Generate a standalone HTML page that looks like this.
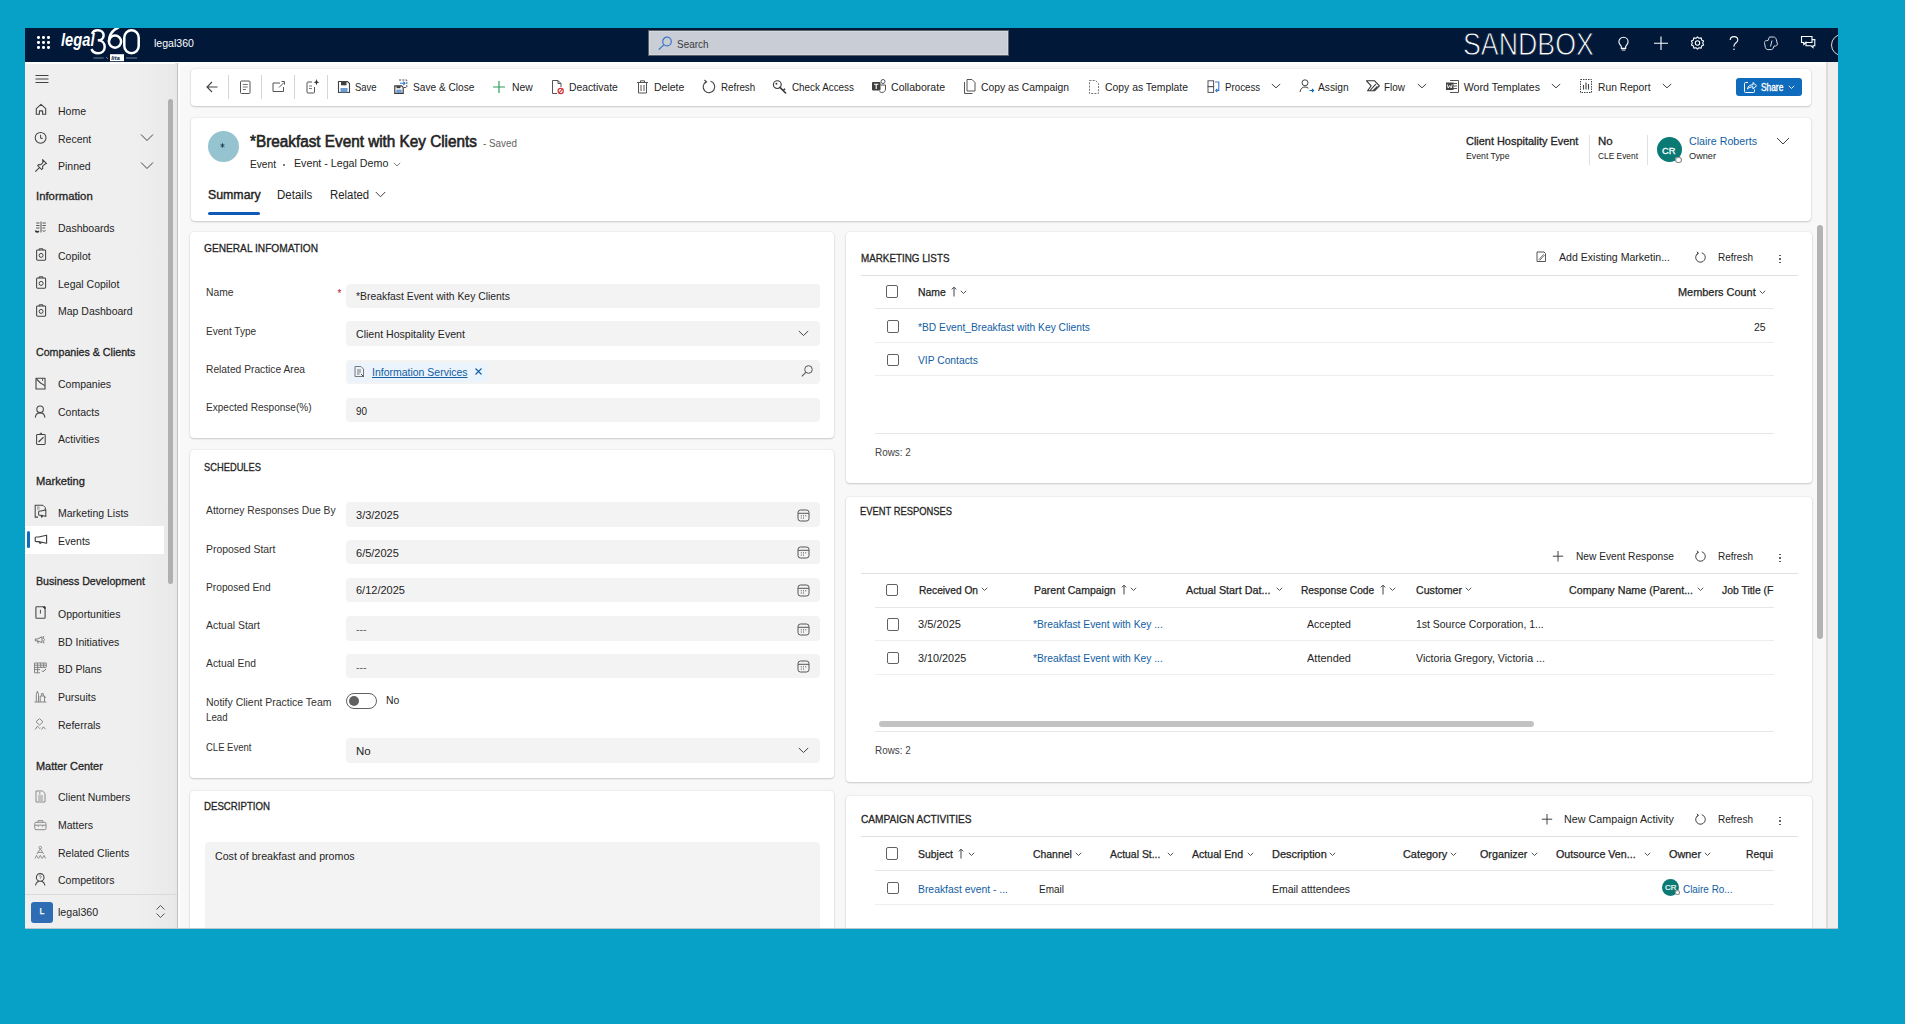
<!DOCTYPE html>
<html><head><meta charset="utf-8"><style>
html,body{margin:0;padding:0;width:1905px;height:1032px;overflow:hidden;background:#07a0c6;position:relative;}
#win{position:absolute;left:25px;top:28px;width:1813px;height:901px;overflow:hidden;background:#f8f8f8;}
#bot{position:absolute;left:0;top:1024px;width:1905px;height:8px;background:#fff;}
.t{position:absolute;white-space:nowrap;font-family:"Liberation Sans",sans-serif;transform-origin:0 0;}
.r{position:absolute;}
</style></head><body><div id="win">
<div class="r" style="left:0.00px;top:0.00px;width:1813.00px;height:34.00px;background:#011839"></div>
<div class="r" style="left:12.40px;top:8.40px;width:2.30px;height:2.30px;background:#fff;border-radius:50%"></div>
<div class="r" style="left:12.40px;top:13.40px;width:2.30px;height:2.30px;background:#fff;border-radius:50%"></div>
<div class="r" style="left:12.40px;top:18.40px;width:2.30px;height:2.30px;background:#fff;border-radius:50%"></div>
<div class="r" style="left:17.40px;top:8.40px;width:2.30px;height:2.30px;background:#fff;border-radius:50%"></div>
<div class="r" style="left:17.40px;top:13.40px;width:2.30px;height:2.30px;background:#fff;border-radius:50%"></div>
<div class="r" style="left:17.40px;top:18.40px;width:2.30px;height:2.30px;background:#fff;border-radius:50%"></div>
<div class="r" style="left:22.40px;top:8.40px;width:2.30px;height:2.30px;background:#fff;border-radius:50%"></div>
<div class="r" style="left:22.40px;top:13.40px;width:2.30px;height:2.30px;background:#fff;border-radius:50%"></div>
<div class="r" style="left:22.40px;top:18.40px;width:2.30px;height:2.30px;background:#fff;border-radius:50%"></div>
<div class="t" style="left:35.80px;top:-0.24px;font-size:18.6px;line-height:24px;color:#fff;font-weight:bold;transform:scaleX(0.7904);font-style:italic;">legal</div>
<svg class="r" style="left:63.00px;top:-1.00px;" width="56" height="36" viewBox="0 0 56 36" fill="none" stroke="#424242" stroke-width="1">
<path d="M4 6.8 C5 4 7.3 3.3 9.8 3.3 C13.3 3.3 15.6 5.5 15.6 8.4 C15.6 11.3 13.2 13.3 9.8 13.3 C13.9 13.3 16.7 16 16.7 20 C16.7 24 13.7 26.3 10.1 26.3 C7 26.3 4.5 24.9 3.5 22" stroke="#fff" stroke-width="2.5"/>
<circle cx="27" cy="14.6" r="6.1" stroke="#fff" stroke-width="2.5"/>
<path d="M20.9 14.6 C20.9 8 24.5 3 31 0" stroke="#fff" stroke-width="2.5"/>
<rect x="36.3" y="3.3" width="14.4" height="23" rx="7.2" stroke="#fff" stroke-width="2.5"/>
<path d="M5.5 31 H15.7 M38 31 H49" stroke="#6f7f9c" stroke-width="1"/>
<path d="M18 30 L20 32" stroke="#8a96b0" stroke-width="0.8"/>
<rect x="22" y="27.2" width="14" height="7" fill="#fff" stroke="none"/>
<text x="23.2" y="33.4" font-family="Liberation Sans" font-style="italic" font-weight="bold" font-size="6" fill="#011839" stroke="none">lita</text>
</svg>
<div class="t" style="left:128.60px;top:8.26px;font-size:10.8px;line-height:14px;color:#fff;transform:scaleX(0.9770);">legal360</div>
<div class="r" style="left:624.00px;top:3.00px;width:359.00px;height:24.00px;background:#c9cdd5;box-shadow:0 0 0 1px #5a606c,inset 0 0 0 1px #d5d8de"></div>
<svg class="r" style="left:631.00px;top:7.00px;" width="18" height="16" viewBox="0 0 18 16" fill="none" stroke="#424242" stroke-width="1"><circle cx="11" cy="6.5" r="4.3" stroke="#3b78c8" stroke-width="1.2"/><path d="M8 9.6 L2.8 14.6" stroke="#3b78c8" stroke-width="1.3"/></svg>
<div class="t" style="left:651.50px;top:9.03px;font-size:10.6px;line-height:14px;color:#3a3a3a;transform:scaleX(0.9379);">Search</div>
<div class="t" style="left:1438.00px;top:-4.51px;font-size:31.5px;line-height:41px;color:#fff;transform:scaleX(0.8491);-webkit-text-stroke:0.9px #011839;">SANDBOX</div>
<svg class="r" style="left:1591.00px;top:7.00px;" width="15" height="17" viewBox="0 0 15 17" fill="none" stroke="#424242" stroke-width="1"><path d="M7.5 2.2 C4.8 2.2 2.9 4.3 2.9 6.8 C2.9 9 4.3 10 5.3 11.4 V13.4 H9.7 V11.4 C10.7 10 12.1 9 12.1 6.8 C12.1 4.3 10.2 2.2 7.5 2.2 Z M5.6 15 H9.4" stroke="#fff" stroke-width="1.1"/></svg>
<svg class="r" style="left:1627.00px;top:7.00px;" width="18" height="17" viewBox="0 0 18 17" fill="none" stroke="#424242" stroke-width="1"><path d="M9 1.5 V15 M2 8.2 H16" stroke="#fff" stroke-width="1.1"/></svg>
<svg class="r" style="left:1664.00px;top:7.00px;" width="17" height="17" viewBox="0 0 17 17" fill="none" stroke="#424242" stroke-width="1"><path d="M8.5 1.8 L10 3.3 L12.2 2.9 L12.6 5 L14.6 6 L13.7 8 L14.6 10 L12.6 11 L12.2 13.1 L10 12.7 L8.5 14.2 L7 12.7 L4.8 13.1 L4.4 11 L2.4 10 L3.3 8 L2.4 6 L4.4 5 L4.8 2.9 L7 3.3 Z" stroke="#fff" stroke-width="1.1" stroke-linejoin="round"/><circle cx="8.5" cy="8" r="2.2" stroke="#fff" stroke-width="1.1"/></svg>
<svg class="r" style="left:1702.00px;top:7.00px;" width="14" height="17" viewBox="0 0 14 17" fill="none" stroke="#424242" stroke-width="1"><path d="M3.2 5 C3.2 2.8 4.9 1.6 7 1.6 C9.2 1.6 10.8 2.9 10.8 4.9 C10.8 6.7 9.6 7.4 8.5 8.2 C7.5 8.9 7 9.5 7 11 V11.8" stroke="#fff" stroke-width="1.1"/><circle cx="7" cy="14.3" r="0.8" fill="#fff" stroke="none"/></svg>
<svg class="r" style="left:1738.00px;top:7.00px;" width="16" height="16" viewBox="0 0 16 16" fill="none" stroke="#424242" stroke-width="1"><path d="M6.5 2 H10.5 C12 2 12.8 3 13.2 4.2 L14.2 8 C14.6 9.6 14 11 12.5 11 H11 L10 13.5 C9.6 14.4 9 14.6 8 14.6 H5 C3.6 14.6 2.8 13.8 2.4 12.6 L1.6 8.6 C1.2 7 2 5.6 3.5 5.6 H5 L6 3 C6.3 2.3 6.2 2 6.5 2 Z" stroke="#d8dbe0" stroke-width="1"/><path d="M7.5 11.5 L9 5.5" stroke="#d8dbe0" stroke-width="1"/></svg>
<svg class="r" style="left:1775.00px;top:6.00px;" width="16" height="16" viewBox="0 0 16 16" fill="none" stroke="#424242" stroke-width="1"><path d="M1.5 2.5 H12 V8.5 H6 L3.8 10.5 V8.5 H1.5 Z" stroke="#fff" stroke-width="1.1"/><path d="M6 7.5 V11.8 H11 L13 13.6 V11.8 H14.8 V5.6 H12" stroke="#fff" stroke-width="1.1"/></svg>
<svg class="r" style="left:1805.00px;top:5.00px;" width="10" height="24" viewBox="0 0 10 24" fill="none" stroke="#424242" stroke-width="1"><circle cx="12" cy="12" r="10.5" stroke="#ddd" stroke-width="1"/></svg>
<div class="r" style="left:153.00px;top:34.00px;width:1660.00px;height:5.00px;background:linear-gradient(#ffffff,#f8f8f8)"></div>
<div class="r" style="left:0.00px;top:34.00px;width:152.00px;height:867.00px;background:linear-gradient(90deg,#efefef 0,#efefef 110px,#e9e9e9 150px)"></div>
<div class="r" style="left:0.00px;top:34.00px;width:1813.00px;height:1.50px;background:#fff"></div>
<div class="r" style="left:150.00px;top:35.00px;width:2.00px;height:866.00px;background:#e7e7e7"></div>
<div class="r" style="left:152.00px;top:35.00px;width:1.00px;height:866.00px;background:#c2c2c2"></div>
<div class="r" style="left:153.00px;top:35.00px;width:2.00px;height:866.00px;background:#fcfcfc"></div>
<div class="r" style="left:143.00px;top:71.00px;width:5.00px;height:485.00px;background:#b0b0b0;border-radius:3px"></div>
<svg class="r" style="left:10.00px;top:46.00px;" width="14" height="10" viewBox="0 0 14 10" fill="none" stroke="#424242" stroke-width="1"><path d="M0.5 1.5 H13.5 M0.5 5 H13.5 M0.5 8.5 H13.5" stroke="#424242" stroke-width="1"/></svg>
<div class="t" style="left:33.00px;top:75.66px;font-size:10.5px;line-height:14px;color:#242424;">Home</div>
<svg class="r" style="left:9.00px;top:74.30px;" width="14" height="14" viewBox="0 0 14 14" fill="none" stroke="#424242" stroke-width="1"><path d="M2.3 6.6 L7 2.4 L11.7 6.6 V12.3 H8.6 V8.9 H5.4 V12.3 H2.3 Z" stroke="#444" stroke-width="1.1" stroke-linejoin="round"/></svg>
<div class="t" style="left:33.00px;top:103.56px;font-size:10.5px;line-height:14px;color:#242424;">Recent</div>
<svg class="r" style="left:9.00px;top:102.20px;" width="14" height="14" viewBox="0 0 14 14" fill="none" stroke="#424242" stroke-width="1"><circle cx="6.6" cy="7.8" r="5.4" stroke="#444" stroke-width="1.05"/><path d="M6.6 4.8 V8.3 H8.8" stroke="#444"/></svg>
<svg class="r" style="left:115.00px;top:105.20px;" width="14" height="9" viewBox="0 0 14 9" fill="none" stroke="#424242" stroke-width="1"><path d="M1 1.5 L7 7.5 L13 1.5" stroke="#424242" stroke-width="1"/></svg>
<div class="t" style="left:33.00px;top:131.36px;font-size:10.5px;line-height:14px;color:#242424;">Pinned</div>
<svg class="r" style="left:9.00px;top:130.00px;" width="14" height="14" viewBox="0 0 14 14" fill="none" stroke="#424242" stroke-width="1"><path d="M8.6 1.6 L12.6 5.6 L10.6 6.3 L8.5 8.4 L8.8 10.4 L7.6 11.5 L3.7 7.6 L4.8 6.4 L6.8 6.7 L8.9 4.6 Z M5.4 9.6 L1.3 13.7" stroke="#444" stroke-width="1.05" stroke-linejoin="round"/></svg>
<svg class="r" style="left:115.00px;top:133.00px;" width="14" height="9" viewBox="0 0 14 9" fill="none" stroke="#424242" stroke-width="1"><path d="M1 1.5 L7 7.5 L13 1.5" stroke="#424242" stroke-width="1"/></svg>
<div class="t" style="left:10.90px;top:161.12px;font-size:11.2px;line-height:15px;color:#242424;-webkit-text-stroke:0.3px #242424;transform:scaleX(1.0137);">Information</div>
<div class="t" style="left:33.00px;top:192.86px;font-size:10.5px;line-height:14px;color:#242424;">Dashboards</div>
<svg class="r" style="left:9.00px;top:191.50px;" width="14" height="14" viewBox="0 0 14 14" fill="none" stroke="#424242" stroke-width="1"><path d="M2.2 3 H5.5 M2.2 5.5 H5.5 M2.2 8 H5.5 M8.5 3 H11.8 M8.5 5.5 H11.8 M8.5 8 H11.2 M7 1.5 V12.5 M8.5 10.5 C9.5 11.5 10.5 11.5 11.5 10.5" stroke="#555" stroke-width="1"/><path d="M1.5 10.5 C2 12.3 4 12.3 4.8 11" stroke="#333" stroke-width="1.6"/></svg>
<div class="t" style="left:33.00px;top:220.76px;font-size:10.5px;line-height:14px;color:#242424;">Copilot</div>
<svg class="r" style="left:9.00px;top:219.40px;" width="14" height="14" viewBox="0 0 14 14" fill="none" stroke="#424242" stroke-width="1"><rect x="2.6" y="3" width="9" height="10.2" rx="0.9" stroke="#444" stroke-width="1.05"/><path d="M5.2 3.3 V1.8 H8.9 V3.3" stroke="#444"/><circle cx="7.1" cy="8.4" r="2" stroke="#444"/></svg>
<div class="t" style="left:33.00px;top:248.66px;font-size:10.5px;line-height:14px;color:#242424;">Legal Copilot</div>
<svg class="r" style="left:9.00px;top:247.30px;" width="14" height="14" viewBox="0 0 14 14" fill="none" stroke="#424242" stroke-width="1"><rect x="2.6" y="3" width="9" height="10.2" rx="0.9" stroke="#444" stroke-width="1.05"/><path d="M5.2 3.3 V1.8 H8.9 V3.3" stroke="#444"/><circle cx="7.1" cy="8.4" r="2" stroke="#444"/></svg>
<div class="t" style="left:33.00px;top:276.36px;font-size:10.5px;line-height:14px;color:#242424;">Map Dashboard</div>
<svg class="r" style="left:9.00px;top:275.00px;" width="14" height="14" viewBox="0 0 14 14" fill="none" stroke="#424242" stroke-width="1"><rect x="2.6" y="3" width="9" height="10.2" rx="0.9" stroke="#444" stroke-width="1.05"/><path d="M5.2 3.3 V1.8 H8.9 V3.3" stroke="#444"/><circle cx="7.1" cy="8.4" r="2" stroke="#444"/></svg>
<div class="t" style="left:10.90px;top:316.92px;font-size:11.2px;line-height:15px;color:#242424;-webkit-text-stroke:0.3px #242424;transform:scaleX(0.9515);">Companies &amp; Clients</div>
<div class="t" style="left:33.00px;top:348.86px;font-size:10.5px;line-height:14px;color:#242424;">Companies</div>
<svg class="r" style="left:9.00px;top:347.50px;" width="14" height="14" viewBox="0 0 14 14" fill="none" stroke="#424242" stroke-width="1"><path d="M2 2.2 H11 V13 H2 Z" stroke="#444" stroke-width="1.1" stroke-linejoin="round"/><path d="M2.4 3 L6.5 7 L9.6 8.8 L10.8 10" stroke="#444" stroke-width="1.05"/><path d="M8.5 2.2 V5" stroke="#444" stroke-width="0.8"/></svg>
<div class="t" style="left:33.00px;top:376.86px;font-size:10.5px;line-height:14px;color:#242424;">Contacts</div>
<svg class="r" style="left:9.00px;top:375.50px;" width="14" height="14" viewBox="0 0 14 14" fill="none" stroke="#424242" stroke-width="1"><circle cx="6.1" cy="5.3" r="3.3" stroke="#484848" stroke-width="1.1"/><path d="M1.3 13.6 C1.6 10.4 3.6 8.9 6.1 8.9 C8.6 8.9 10.6 10.4 10.9 13.6" stroke="#484848" stroke-width="1.1"/></svg>
<div class="t" style="left:33.00px;top:404.36px;font-size:10.5px;line-height:14px;color:#242424;">Activities</div>
<svg class="r" style="left:9.00px;top:403.00px;" width="14" height="14" viewBox="0 0 14 14" fill="none" stroke="#424242" stroke-width="1"><rect x="2.6" y="3.4" width="8.6" height="10" rx="0.8" stroke="#444" stroke-width="1.05"/><path d="M5.2 3.6 L6.9 1.8 L8.6 3.6" stroke="#444"/><path d="M4.6 11 L9.5 6.1 M4.6 11 L5.8 9.4" stroke="#444" stroke-width="1.2"/></svg>
<div class="t" style="left:10.90px;top:446.12px;font-size:11.2px;line-height:15px;color:#242424;-webkit-text-stroke:0.3px #242424;transform:scaleX(0.9964);">Marketing</div>
<div class="t" style="left:33.00px;top:477.76px;font-size:10.5px;line-height:14px;color:#242424;">Marketing Lists</div>
<svg class="r" style="left:9.00px;top:476.40px;" width="14" height="14" viewBox="0 0 14 14" fill="none" stroke="#424242" stroke-width="1"><path d="M9 1.3 H1.2 V13.1 H4" stroke="#444" stroke-width="1.05"/><path d="M9 1.3 L11.3 3.6 V6.2" stroke="#444"/><path d="M3 3.2 H5.5 M3 5 H5.5" stroke="#888"/><path d="M4.6 8 Q4.6 7 5.6 7 H7 L11.8 6 V12.3 L7 11.3 H5.6 Q4.6 11.3 4.6 10.3 Z M7 11.4 L7.6 13 L8.8 12" stroke="#444" stroke-width="1.05"/></svg>
<div class="r" style="left:0.00px;top:498.00px;width:139.00px;height:28.00px;background:#fff"></div>
<div class="r" style="left:2.00px;top:503.00px;width:3.00px;height:17.00px;background:#0f6cbd;border-radius:2px"></div>
<div class="t" style="left:33.00px;top:505.66px;font-size:10.5px;line-height:14px;color:#242424;">Events</div>
<svg class="r" style="left:9.00px;top:504.30px;" width="14" height="14" viewBox="0 0 14 14" fill="none" stroke="#424242" stroke-width="1"><path d="M1.2 6 Q1.2 5 2.2 5 H4.6 L12.6 3.2 V11.2 L4.6 9.6 H2.2 Q1.2 9.6 1.2 8.6 Z" stroke="#404040" stroke-width="1.15" stroke-linejoin="round"/><path d="M5.2 9.8 L6 11.5 L7.6 10.5" stroke="#404040" stroke-width="1.1"/></svg>
<div class="t" style="left:10.90px;top:546.42px;font-size:11.2px;line-height:15px;color:#242424;-webkit-text-stroke:0.3px #242424;transform:scaleX(0.9517);">Business Development</div>
<div class="t" style="left:33.00px;top:578.96px;font-size:10.5px;line-height:14px;color:#242424;">Opportunities</div>
<svg class="r" style="left:9.00px;top:577.60px;" width="14" height="14" viewBox="0 0 14 14" fill="none" stroke="#424242" stroke-width="1"><rect x="1.9" y="0.8" width="9.2" height="11.4" rx="0.8" stroke="#484848" stroke-width="1.1"/><path d="M6.4 3.8 V7.6" stroke="#484848"/><path d="M9.4 1 H11 V2.8 Z" fill="#333" stroke="#333"/></svg>
<div class="t" style="left:33.00px;top:606.76px;font-size:10.5px;line-height:14px;color:#242424;">BD Initiatives</div>
<svg class="r" style="left:9.00px;top:605.40px;" width="14" height="14" viewBox="0 0 14 14" fill="none" stroke="#424242" stroke-width="1"><path d="M1.3 6 H3.5 L8 3.8 V9.6 L3.5 7.8 H1.3 Z M3.5 8 L4.3 10.5" stroke="#777" stroke-width="1"/><path d="M9.8 3 L9.2 5.2 L10.6 6.5 L9.5 8.2 L10 10.6" stroke="#777" stroke-width="0.9"/></svg>
<div class="t" style="left:33.00px;top:634.36px;font-size:10.5px;line-height:14px;color:#242424;">BD Plans</div>
<svg class="r" style="left:9.00px;top:633.00px;" width="14" height="14" viewBox="0 0 14 14" fill="none" stroke="#424242" stroke-width="1"><path d="M0.5 2 H12.3 V6.2 M0.5 2 V11.8 H6 M0.5 4.2 H12.3 M0.5 6.4 H12 M0.5 8.6 H6 M3.6 2 V11.8 M6.7 2 V7 M9.6 2 V6.4" stroke="#808080" stroke-width="0.95"/><path d="M7.8 9.6 L9 10.8 L12 8" stroke="#707070" stroke-width="1"/></svg>
<div class="t" style="left:33.00px;top:662.16px;font-size:10.5px;line-height:14px;color:#242424;">Pursuits</div>
<svg class="r" style="left:9.00px;top:660.80px;" width="14" height="14" viewBox="0 0 14 14" fill="none" stroke="#424242" stroke-width="1"><path d="M0.5 13 H12.3 M2.3 13 V5.5 L3.4 2.2 L4.5 5.5 V13 M6.2 13 V7 H10.5 V13 M7.5 6.5 V4.6 H9.3 V7" stroke="#808080" stroke-width="0.95"/><path d="M10.5 8.3 H12" stroke="#808080"/></svg>
<div class="t" style="left:33.00px;top:689.96px;font-size:10.5px;line-height:14px;color:#242424;">Referrals</div>
<svg class="r" style="left:9.00px;top:688.60px;" width="14" height="14" viewBox="0 0 14 14" fill="none" stroke="#424242" stroke-width="1"><path d="M5.5 1.6 L9 4.8 L5.5 8 L2 4.8 Z" stroke="#808080" stroke-width="0.95"/><path d="M1.2 12.5 L3.3 9.3 L5 10.5 M7.6 12.5 L9.4 9.8 L11.6 12.2 M5.5 11.8 L6.2 10.6" stroke="#808080" stroke-width="0.95"/></svg>
<div class="t" style="left:10.90px;top:730.62px;font-size:11.2px;line-height:15px;color:#242424;-webkit-text-stroke:0.3px #242424;transform:scaleX(0.9772);">Matter Center</div>
<div class="t" style="left:33.00px;top:762.36px;font-size:10.5px;line-height:14px;color:#242424;">Client Numbers</div>
<svg class="r" style="left:9.00px;top:761.00px;" width="14" height="14" viewBox="0 0 14 14" fill="none" stroke="#424242" stroke-width="1"><path d="M2 2 H8.6 L11 4.4 V13 H2 Z" stroke="#8a8a8a" stroke-width="1" stroke-linejoin="round"/><path d="M4 7 H9 M4 9 H9 M4 11 H9 M5.8 3 V5.6" stroke="#8a8a8a" stroke-width="0.9"/></svg>
<div class="t" style="left:33.00px;top:790.16px;font-size:10.5px;line-height:14px;color:#242424;">Matters</div>
<svg class="r" style="left:9.00px;top:788.80px;" width="14" height="14" viewBox="0 0 14 14" fill="none" stroke="#424242" stroke-width="1"><rect x="0.8" y="5.3" width="11.2" height="7.4" rx="1.2" stroke="#8a8a8a" stroke-width="1"/><path d="M4 5.3 V3.6 H8.8 V5.3 M0.8 8.2 H12 M3.5 8.2 L4.6 9.8 M9.3 8.2 L8.2 9.8" stroke="#8a8a8a" stroke-width="0.95"/></svg>
<div class="t" style="left:33.00px;top:817.96px;font-size:10.5px;line-height:14px;color:#242424;">Related Clients</div>
<svg class="r" style="left:9.00px;top:816.60px;" width="14" height="14" viewBox="0 0 14 14" fill="none" stroke="#424242" stroke-width="1"><circle cx="6.3" cy="2.6" r="1.3" stroke="#888" stroke-width="0.9"/><path d="M6.3 3.9 L3 9 M6.3 3.9 L9.6 9 M3.5 7.4 H9.1 M1 13.5 L2.6 10.3 L4.2 13.5 M4.7 13.5 L6.3 10.3 L7.9 13.5 M8.4 13.5 L10 10.3 L11.6 13.5" stroke="#888" stroke-width="0.9"/></svg>
<div class="t" style="left:33.00px;top:845.36px;font-size:10.5px;line-height:14px;color:#242424;">Competitors</div>
<svg class="r" style="left:9.00px;top:844.00px;" width="14" height="14" viewBox="0 0 14 14" fill="none" stroke="#424242" stroke-width="1"><circle cx="6.2" cy="5.4" r="3.8" stroke="#444" stroke-width="1.1"/><path d="M1.5 13.5 C2 10.5 4 9.4 5.2 9.2 M10.9 13.5 C10.4 10.5 8.4 9.4 7.2 9.2" stroke="#444" stroke-width="1.1"/><path d="M5.2 4.5 C5.2 3.4 7.4 3.4 7.3 4.7 C7.2 5.6 6.2 5.7 6.2 6.8" stroke="#666" stroke-width="0.8"/></svg>
<div class="r" style="left:0.00px;top:866.00px;width:152.00px;height:1.00px;background:#dadada"></div>
<div class="r" style="left:6.00px;top:873.50px;width:21.50px;height:21.50px;background:#2e6db4;border-radius:3px"></div>
<div class="t" style="left:14.60px;top:877.75px;font-size:8.8px;line-height:11px;color:#fff;-webkit-text-stroke:0.25px #fff;">L</div>
<div class="t" style="left:33.00px;top:877.33px;font-size:10.6px;line-height:14px;color:#242424;">legal360</div>
<svg class="r" style="left:129.00px;top:875.00px;" width="14" height="18" viewBox="0 0 14 18" fill="none" stroke="#424242" stroke-width="1"><path d="M2.5 6.5 L6.5 2.5 L10.5 6.5 M2.5 10.5 L6.5 14.5 L10.5 10.5" stroke="#555" stroke-width="1"/></svg>
<div class="r" style="left:1801.00px;top:34.00px;width:2.00px;height:867.00px;background:#dcdcdc"></div>
<div class="r" style="left:1803.00px;top:34.00px;width:10.00px;height:867.00px;background:#eeeeee"></div>
<div class="r" style="left:1792.00px;top:196.50px;width:5.50px;height:414.50px;background:#b3b3b3;border-radius:3px"></div>
<div class="r" style="left:165.50px;top:40.50px;width:1620.50px;height:37.00px;background:#fff;border-radius:4px;box-shadow:0 0 2px rgba(0,0,0,.12),0 1px 2px rgba(0,0,0,.16)"></div>
<div class="r" style="left:203.00px;top:46.80px;width:1.00px;height:24.50px;background:#d6d6d6"></div>
<div class="r" style="left:236.00px;top:46.80px;width:1.00px;height:24.50px;background:#d6d6d6"></div>
<div class="r" style="left:269.00px;top:46.80px;width:1.00px;height:24.50px;background:#d6d6d6"></div>
<div class="r" style="left:302.00px;top:46.80px;width:1.00px;height:24.50px;background:#d6d6d6"></div>
<svg class="r" style="left:180.00px;top:52.00px;" width="14" height="14" viewBox="0 0 14 14" fill="none" stroke="#424242" stroke-width="1"><path d="M7 2 L2 7 L7 12 M2 7 H12.5" stroke="#424242" stroke-width="1.1"/></svg>
<svg class="r" style="left:214.00px;top:52.00px;" width="13" height="15" viewBox="0 0 13 15" fill="none" stroke="#424242" stroke-width="1"><rect x="1.5" y="1" width="9.5" height="12.5" rx="1" stroke="#555"/><path d="M3.8 4.5 H8.8 M3.8 7 H8.8 M3.8 9.5 H7" stroke="#777"/></svg>
<svg class="r" style="left:246.00px;top:51.00px;" width="15" height="15" viewBox="0 0 15 15" fill="none" stroke="#424242" stroke-width="1"><path d="M9 4 H2 V12.5 H12.5 V8" stroke="#555"/><path d="M8 8.5 L13 3.5 M10.5 2.5 H13.5 V5.5" stroke="#555"/></svg>
<svg class="r" style="left:280.00px;top:50.00px;" width="15" height="17" viewBox="0 0 15 17" fill="none" stroke="#424242" stroke-width="1"><path d="M7 4 H3 C2.3 4 2 4.5 2 5 V14 C2 14.8 2.3 15 3 15 H8.5 C9.3 15 9.5 14.6 9.5 14 V9" stroke="#555"/><path d="M4 8 H7 M4 10.5 H7" stroke="#777"/><path d="M11.5 1 L12.3 3.5 L14.5 4.2 L12.3 5 L11.5 7.5 L10.7 5 L8.5 4.2 L10.7 3.5 Z" fill="#333" stroke="none"/></svg>
<svg class="r" style="left:312.00px;top:52.00px;" width="14" height="14" viewBox="0 0 14 14" fill="none" stroke="#424242" stroke-width="1"><path d="M1.5 1.5 H10.5 L12.5 3.5 V12.5 H1.5 Z" stroke="#404040" stroke-width="1.1"/><rect x="4" y="1.8" width="5.5" height="3.5" fill="#404040" stroke="none"/><rect x="3.5" y="8" width="7" height="4.3" fill="#6b9bd1" stroke="none"/></svg>
<div class="t" style="left:330.00px;top:51.73px;font-size:10.6px;line-height:14px;color:#242424;transform:scaleX(0.8940);">Save</div>
<svg class="r" style="left:368.00px;top:50.00px;" width="16" height="17" viewBox="0 0 16 17" fill="none" stroke="#424242" stroke-width="1"><path d="M6 2 H13.8 V9.5 H11" stroke="#555" stroke-width="1" stroke-dasharray="2.2 1"/><path d="M7 5.3 H12 M10.3 3.6 L12 5.3 L10.3 7" stroke="#2f7bd0" stroke-width="1.1"/><path d="M1.8 7.8 H8.6 L10.2 9.4 V15.4 H1.8 Z" stroke="#3a3a3a" stroke-width="1.2"/><rect x="3.3" y="11.6" width="5.4" height="3.3" fill="#6b9bd1" stroke="none"/><rect x="3.5" y="8.2" width="4" height="2" fill="#3a3a3a" stroke="none"/></svg>
<div class="t" style="left:388.30px;top:51.73px;font-size:10.6px;line-height:14px;color:#242424;transform:scaleX(0.9560);">Save &amp; Close</div>
<svg class="r" style="left:467.00px;top:52.00px;" width="14" height="14" viewBox="0 0 14 14" fill="none" stroke="#424242" stroke-width="1"><path d="M7 1 V13 M1 7 H13" stroke="#2e9e5a" stroke-width="1.2"/></svg>
<div class="t" style="left:486.50px;top:51.73px;font-size:10.6px;line-height:14px;color:#242424;transform:scaleX(0.9809);">New</div>
<svg class="r" style="left:525.00px;top:51.00px;" width="15" height="16" viewBox="0 0 15 16" fill="none" stroke="#424242" stroke-width="1"><path d="M8 1.5 H2.5 V14.5 H7 M8 1.5 L11 4.5 V8 M8 1.5 V4.5 H11" stroke="#555"/><circle cx="10.7" cy="12" r="2.6" stroke="#d13438" stroke-width="1.2"/><path d="M9 13.8 L12.4 10.2" stroke="#d13438" stroke-width="1.1"/></svg>
<div class="t" style="left:544.00px;top:51.73px;font-size:10.6px;line-height:14px;color:#242424;transform:scaleX(0.9744);">Deactivate</div>
<svg class="r" style="left:611.00px;top:51.00px;" width="13" height="16" viewBox="0 0 13 16" fill="none" stroke="#424242" stroke-width="1"><path d="M1 3.5 H12 M4.5 3.5 V1.8 H8.5 V3.5 M2.5 3.5 V14 H10.5 V3.5 M5 6 V12 M8 6 V12" stroke="#555"/></svg>
<div class="t" style="left:629.00px;top:51.73px;font-size:10.6px;line-height:14px;color:#242424;transform:scaleX(0.9921);">Delete</div>
<svg class="r" style="left:676.00px;top:51.00px;" width="16" height="16" viewBox="0 0 16 16" fill="none" stroke="#424242" stroke-width="1"><path d="M5.2 2.8 A5.8 5.8 0 1 0 9.5 2.3" stroke="#444" stroke-width="1.1"/><path d="M3.5 1 L5.5 3 L3.2 4.6" stroke="#444" stroke-width="1.1"/></svg>
<div class="t" style="left:695.60px;top:51.73px;font-size:10.6px;line-height:14px;color:#242424;transform:scaleX(0.9214);">Refresh</div>
<svg class="r" style="left:747.00px;top:51.00px;" width="16" height="16" viewBox="0 0 16 16" fill="none" stroke="#424242" stroke-width="1"><circle cx="5.3" cy="5.6" r="3.9" stroke="#3a3a3a" stroke-width="1.15"/><circle cx="4.4" cy="4.7" r="1" fill="#3a3a3a" stroke="none"/><path d="M8 8.4 L13.6 14 M11.2 11.6 L12.6 10.2" stroke="#3a3a3a" stroke-width="1.6" stroke-linecap="round"/></svg>
<div class="t" style="left:767.00px;top:51.73px;font-size:10.6px;line-height:14px;color:#242424;transform:scaleX(0.9313);">Check Access</div>
<svg class="r" style="left:846.00px;top:50.00px;" width="16" height="16" viewBox="0 0 16 16" fill="none" stroke="#424242" stroke-width="1"><rect x="1" y="4" width="8.5" height="8.5" rx="1" fill="#404040" stroke="none"/><path d="M3 6.2 H7.5 M5.2 6.2 V11" stroke="#fff" stroke-width="1.1"/><circle cx="12" cy="3.5" r="2" stroke="#555"/><path d="M9.5 7 H14.5 V11 C14.5 13 13 14.5 11 14.5 C9.8 14.5 9 14 8.5 13" stroke="#555"/></svg>
<div class="t" style="left:865.70px;top:51.73px;font-size:10.6px;line-height:14px;color:#242424;transform:scaleX(0.9979);">Collaborate</div>
<svg class="r" style="left:938.00px;top:50.00px;" width="14" height="17" viewBox="0 0 14 17" fill="none" stroke="#424242" stroke-width="1"><path d="M4 1.5 H9 L12 4.5 V13 H4 Z" stroke="#555"/><path d="M1.5 4 V15.5 H9.5" stroke="#555"/></svg>
<div class="t" style="left:956.00px;top:51.73px;font-size:10.6px;line-height:14px;color:#242424;transform:scaleX(0.9762);">Copy as Campaign</div>
<svg class="r" style="left:1063.00px;top:51.00px;" width="12" height="16" viewBox="0 0 12 16" fill="none" stroke="#424242" stroke-width="1"><path d="M1.5 1.5 H7.5 L10.5 4.5 V14.5 H1.5 Z" stroke="#777" stroke-dasharray="2 1.2"/></svg>
<div class="t" style="left:1080.00px;top:51.73px;font-size:10.6px;line-height:14px;color:#242424;transform:scaleX(0.9805);">Copy as Template</div>
<svg class="r" style="left:1181.00px;top:50.00px;" width="16" height="17" viewBox="0 0 16 17" fill="none" stroke="#424242" stroke-width="1"><rect x="2" y="2.8" width="5.6" height="5.8" stroke="#555" stroke-width="1"/><rect x="2" y="8.6" width="5.6" height="5.8" stroke="#555" stroke-width="1"/><path d="M9 4 H12.8 V12.4 H10" stroke="#2f7bd0" stroke-width="1.1"/><path d="M11.3 10.8 L9.7 12.4 L11.3 14" stroke="#2f7bd0" stroke-width="1.1"/></svg>
<div class="t" style="left:1199.80px;top:51.73px;font-size:10.6px;line-height:14px;color:#242424;transform:scaleX(0.9193);">Process</div>
<svg class="r" style="left:1246.00px;top:55.00px;" width="10" height="7" viewBox="0 0 10 7" fill="none" stroke="#424242" stroke-width="1"><path d="M0.8 1 L5.0 4.8 L9.2 1" stroke="#424242" stroke-width="1"/></svg>
<svg class="r" style="left:1274.00px;top:50.00px;" width="16" height="16" viewBox="0 0 16 16" fill="none" stroke="#424242" stroke-width="1"><circle cx="6" cy="4.8" r="3" stroke="#444"/><path d="M1 14 C1.5 10.5 3.5 9 6 9 C7.5 9 8.5 9.5 9.5 10.3" stroke="#444"/><path d="M10.5 12.5 H14.5 M13 11 L14.5 12.5 L13 14" stroke="#0f6cbd" stroke-width="1.2"/></svg>
<div class="t" style="left:1292.70px;top:51.73px;font-size:10.6px;line-height:14px;color:#242424;transform:scaleX(0.9618);">Assign</div>
<svg class="r" style="left:1340.00px;top:51.00px;" width="16" height="14" viewBox="0 0 16 14" fill="none" stroke="#424242" stroke-width="1"><path d="M1.5 1.8 H9.6 L14.4 6.8 L9.6 11.8 H2.6 L6.2 6.8 Z" stroke="#333" stroke-width="1.1" stroke-linejoin="round"/><path d="M5 11.5 L10.8 5.2 M8.4 11.5 L12.4 7.3" stroke="#333" stroke-width="1.1"/></svg>
<div class="t" style="left:1359.00px;top:51.73px;font-size:10.6px;line-height:14px;color:#242424;transform:scaleX(0.9383);">Flow</div>
<svg class="r" style="left:1392.00px;top:55.00px;" width="10" height="7" viewBox="0 0 10 7" fill="none" stroke="#424242" stroke-width="1"><path d="M0.8 1 L5.0 4.8 L9.2 1" stroke="#424242" stroke-width="1"/></svg>
<svg class="r" style="left:1420.00px;top:51.00px;" width="15" height="15" viewBox="0 0 15 15" fill="none" stroke="#424242" stroke-width="1"><path d="M5 1.5 H13.5 V13.5 H5" stroke="#555"/><path d="M7 4.5 H12 M7 7 H12 M7 9.5 H12" stroke="#555"/><rect x="1" y="3.5" width="7.5" height="7.5" fill="#444" stroke="none"/><path d="M2.2 5.5 L3.2 9 L4.7 6.5 L6.2 9 L7.2 5.5" stroke="#fff" stroke-width="0.9"/></svg>
<div class="t" style="left:1438.80px;top:51.73px;font-size:10.6px;line-height:14px;color:#242424;transform:scaleX(1.0000);">Word Templates</div>
<svg class="r" style="left:1526.00px;top:55.00px;" width="10" height="7" viewBox="0 0 10 7" fill="none" stroke="#424242" stroke-width="1"><path d="M0.8 1 L5.0 4.8 L9.2 1" stroke="#424242" stroke-width="1"/></svg>
<svg class="r" style="left:1554.00px;top:50.00px;" width="14" height="16" viewBox="0 0 14 16" fill="none" stroke="#424242" stroke-width="1"><rect x="1.5" y="1.5" width="11" height="13" stroke="#444" stroke-dasharray="1.5 1"/><path d="M4.5 11.5 V7 M7 11.5 V4.5 M9.5 11.5 V6" stroke="#444" stroke-width="1.1"/></svg>
<div class="t" style="left:1573.00px;top:51.73px;font-size:10.6px;line-height:14px;color:#242424;transform:scaleX(0.9703);">Run Report</div>
<svg class="r" style="left:1637.00px;top:55.00px;" width="10" height="7" viewBox="0 0 10 7" fill="none" stroke="#424242" stroke-width="1"><path d="M0.8 1 L5.0 4.8 L9.2 1" stroke="#424242" stroke-width="1"/></svg>
<div class="r" style="left:1710.70px;top:49.80px;width:66.50px;height:18.50px;background:#0f6cbd;border-radius:3px"></div>
<svg class="r" style="left:1718.00px;top:52.00px;" width="15" height="14" viewBox="0 0 15 14" fill="none" stroke="#424242" stroke-width="1"><path d="M5 2.5 H2.5 C1.8 2.5 1.5 3 1.5 3.5 V11.5 C1.5 12.2 1.8 12.5 2.5 12.5 H10.5 C11.2 12.5 11.5 12.2 11.5 11.5 V9.5" stroke="#fff" stroke-width="1"/><path d="M4.5 9 C5 6 7 4.8 10 4.8 V2.5 L13.5 5.8 L10 9 V6.8 C7.5 6.8 6 7.5 4.5 9 Z" stroke="#fff" stroke-width="1"/></svg>
<div class="t" style="left:1735.70px;top:52.60px;font-size:10.4px;line-height:14px;color:#fff;-webkit-text-stroke:0.35px #fff;transform:scaleX(0.8042);">Share</div>
<svg class="r" style="left:1763.00px;top:57.00px;" width="7" height="5" viewBox="0 0 7 5" fill="none" stroke="#424242" stroke-width="1"><path d="M0.8 0.8 L3.5 3.5 L6.2 0.8" stroke="#fff" stroke-width="0.9"/></svg>
<div class="r" style="left:165.50px;top:90.00px;width:1620.50px;height:103.00px;background:#fff;border-radius:4px;box-shadow:0 0 2px rgba(0,0,0,.12),0 1px 2px rgba(0,0,0,.16)"></div>
<div class="r" style="left:182.50px;top:103.00px;width:31.00px;height:31.00px;background:#95c4d0;border-radius:50%"></div>
<svg class="r" style="left:195.20px;top:114.50px;" width="5" height="5" viewBox="0 0 5 5" fill="none" stroke="#424242" stroke-width="1"><path d="M2.5 0.3 V4.7 M0.6 1.4 L4.4 3.6 M0.6 3.6 L4.4 1.4" stroke="#1d3a4a" stroke-width="0.9"/></svg>
<div class="t" style="left:225.40px;top:103.59px;font-size:15.6px;line-height:20px;color:#242424;-webkit-text-stroke:0.6px #242424;transform:scaleX(0.9806);">*Breakfast Event with Key Clients</div>
<div class="t" style="left:458.40px;top:108.60px;font-size:10.4px;line-height:14px;color:#616161;transform:scaleX(0.9458);">- Saved</div>
<div class="t" style="left:225.00px;top:128.63px;font-size:10.6px;line-height:14px;color:#242424;transform:scaleX(0.9592);">Event</div>
<div class="r" style="left:258.00px;top:136.00px;width:1.60px;height:1.60px;background:#616161;border-radius:50%"></div>
<div class="t" style="left:269.00px;top:128.33px;font-size:10.6px;line-height:14px;color:#242424;transform:scaleX(1.0076);">Event - Legal Demo</div>
<svg class="r" style="left:367.50px;top:134.00px;" width="8" height="5" viewBox="0 0 8 5" fill="none" stroke="#424242" stroke-width="1"><path d="M0.8 0.8 L4 4 L7.2 0.8" stroke="#707070" stroke-width="0.9"/></svg>
<div class="t" style="left:182.50px;top:159.13px;font-size:12.6px;line-height:16px;color:#242424;-webkit-text-stroke:0.4px #242424;transform:scaleX(0.9796);">Summary</div>
<div class="t" style="left:251.80px;top:159.34px;font-size:12px;line-height:16px;color:#242424;transform:scaleX(0.9596);">Details</div>
<div class="t" style="left:304.80px;top:159.34px;font-size:12px;line-height:16px;color:#242424;transform:scaleX(0.9477);">Related</div>
<svg class="r" style="left:350.00px;top:163.00px;" width="11" height="7" viewBox="0 0 11 7" fill="none" stroke="#424242" stroke-width="1"><path d="M0.8 1 L5.5 5.8 L10.2 1" stroke="#424242" stroke-width="1"/></svg>
<div class="r" style="left:182.90px;top:184.30px;width:52.50px;height:3.00px;background:#0f5ab8;border-radius:2px"></div>
<div class="t" style="left:1441.20px;top:106.22px;font-size:11.2px;line-height:15px;color:#242424;-webkit-text-stroke:0.3px #242424;transform:scaleX(0.9769);">Client Hospitality Event</div>
<div class="t" style="left:1441.20px;top:120.80px;font-size:9.8px;line-height:13px;color:#242424;transform:scaleX(0.8904);">Event Type</div>
<div class="r" style="left:1563.50px;top:107.00px;width:1.00px;height:30.00px;background:#e0e0e0"></div>
<div class="t" style="left:1573.00px;top:106.22px;font-size:11.2px;line-height:15px;color:#242424;-webkit-text-stroke:0.3px #242424;transform:scaleX(1.0262);">No</div>
<div class="t" style="left:1573.00px;top:120.80px;font-size:9.8px;line-height:13px;color:#242424;transform:scaleX(0.8538);">CLE Event</div>
<div class="r" style="left:1622.00px;top:107.00px;width:1.00px;height:30.00px;background:#e0e0e0"></div>
<div class="r" style="left:1631.80px;top:109.20px;width:24.80px;height:25.00px;background:#0b7a75;border-radius:50%"></div>
<div class="t" style="left:1637.30px;top:116.10px;font-size:9.8px;line-height:13px;color:#fff;-webkit-text-stroke:0.3px #fff;transform:scaleX(0.9478);">CR</div>
<div class="r" style="left:1650.00px;top:128.60px;width:6.60px;height:6.60px;background:#fff;border-radius:50%;box-shadow:inset 0 0 0 1.1px #8a8a8a"></div>
<div class="t" style="left:1664.00px;top:106.39px;font-size:11px;line-height:14px;color:#115ea3;transform:scaleX(0.9672);">Claire Roberts</div>
<div class="t" style="left:1664.00px;top:120.80px;font-size:9.8px;line-height:13px;color:#242424;transform:scaleX(0.9354);">Owner</div>
<svg class="r" style="left:1751.00px;top:109.00px;" width="14" height="8" viewBox="0 0 14 8" fill="none" stroke="#424242" stroke-width="1"><path d="M1 1 L7 7 L13 1" stroke="#424242" stroke-width="1"/></svg>
<div class="r" style="left:165.00px;top:204.00px;width:644.00px;height:205.50px;background:#fff;border-radius:4px;box-shadow:0 0 2px rgba(0,0,0,.12),0 1px 2px rgba(0,0,0,.16)"></div>
<div class="t" style="left:179.00px;top:213.12px;font-size:11.2px;line-height:15px;color:#242424;-webkit-text-stroke:0.3px #242424;transform:scaleX(0.9079);">GENERAL INFOMATION</div>
<div class="t" style="left:180.60px;top:256.83px;font-size:10.6px;line-height:14px;color:#323130;transform:scaleX(0.9725);">Name</div>
<div class="r" style="left:321.00px;top:255.50px;width:473.50px;height:24.50px;background:#f3f3f3;border-radius:4px"></div>
<div class="t" style="left:331.00px;top:261.43px;font-size:10.6px;line-height:14px;color:#242424;transform:scaleX(0.9790);">*Breakfast Event with Key Clients</div>
<div class="t" style="left:312.50px;top:259.04px;font-size:10px;line-height:13px;color:#c50f1f;">*</div>
<div class="t" style="left:180.60px;top:295.73px;font-size:10.6px;line-height:14px;color:#323130;transform:scaleX(0.9500);">Event Type</div>
<div class="r" style="left:321.00px;top:293.30px;width:473.50px;height:24.50px;background:#f3f3f3;border-radius:4px"></div>
<div class="t" style="left:331.00px;top:299.23px;font-size:10.6px;line-height:14px;color:#242424;transform:scaleX(1.0001);">Client Hospitality Event</div>
<svg class="r" style="left:772.50px;top:302.30px;" width="11" height="7" viewBox="0 0 11 7" fill="none" stroke="#424242" stroke-width="1"><path d="M0.8 1 L5.5 5.5 L10.2 1" stroke="#424242" stroke-width="1"/></svg>
<div class="t" style="left:180.60px;top:334.23px;font-size:10.6px;line-height:14px;color:#323130;transform:scaleX(0.9666);">Related Practice Area</div>
<div class="r" style="left:321.00px;top:331.80px;width:473.50px;height:24.50px;background:#f3f3f3;border-radius:4px"></div>
<div class="r" style="left:324.40px;top:334.50px;width:138.20px;height:19.00px;background:#ebf3fc;border-radius:3px"></div>
<svg class="r" style="left:327.50px;top:337.00px;" width="13" height="13" viewBox="0 0 13 13" fill="none" stroke="#424242" stroke-width="1"><path d="M2 1.5 H8 L10.5 4 V11.5 H2 Z M4 5 H8 M4 7 H8 M4 9 H6.5" stroke="#777"/><path d="M8 9 L11 12" stroke="#555"/></svg>
<div class="t" style="left:347.40px;top:337.33px;font-size:10.6px;line-height:14px;color:#115ea3;transform:scaleX(0.9895);text-decoration:underline;">Information Services</div>
<svg class="r" style="left:448.50px;top:339.00px;" width="9" height="9" viewBox="0 0 9 9" fill="none" stroke="#424242" stroke-width="1"><path d="M1.5 1.5 L7.5 7.5 M7.5 1.5 L1.5 7.5" stroke="#115ea3" stroke-width="1.1"/></svg>
<svg class="r" style="left:774.50px;top:336.00px;" width="14" height="14" viewBox="0 0 14 14" fill="none" stroke="#424242" stroke-width="1"><circle cx="8.5" cy="5.5" r="3.8" stroke="#555"/><path d="M5.8 8.3 L1.8 12.3" stroke="#555" stroke-width="1.1"/></svg>
<div class="t" style="left:180.60px;top:372.03px;font-size:10.6px;line-height:14px;color:#323130;transform:scaleX(0.9483);">Expected Response(%)</div>
<div class="r" style="left:321.00px;top:369.60px;width:473.50px;height:24.50px;background:#f3f3f3;border-radius:4px"></div>
<div class="t" style="left:331.00px;top:375.53px;font-size:10.6px;line-height:14px;color:#242424;transform:scaleX(0.9329);">90</div>
<div class="r" style="left:165.00px;top:422.30px;width:644.00px;height:327.40px;background:#fff;border-radius:4px;box-shadow:0 0 2px rgba(0,0,0,.12),0 1px 2px rgba(0,0,0,.16)"></div>
<div class="t" style="left:179.00px;top:431.62px;font-size:11.2px;line-height:15px;color:#242424;-webkit-text-stroke:0.3px #242424;transform:scaleX(0.8333);">SCHEDULES</div>
<div class="t" style="left:180.60px;top:475.33px;font-size:10.6px;line-height:14px;color:#323130;transform:scaleX(0.9740);">Attorney Responses Due By</div>
<div class="r" style="left:321.00px;top:474.00px;width:473.50px;height:24.50px;background:#f3f3f3;border-radius:4px"></div>
<div class="t" style="left:331.00px;top:479.93px;font-size:10.6px;line-height:14px;color:#242424;transform:scaleX(1.0397);">3/3/2025</div>
<svg class="r" style="left:771.50px;top:480.50px;" width="13" height="13" viewBox="0 0 13 13" fill="none" stroke="#424242" stroke-width="1"><rect x="1" y="1" width="11" height="11" rx="2.5" stroke="#555"/><path d="M1 4.3 H12" stroke="#555"/><path d="M3.8 6.8 h1 M6 6.8 h1 M8.2 6.8 h1 M3.8 9 h1 M6 9 h1" stroke="#555"/></svg>
<div class="t" style="left:180.60px;top:514.13px;font-size:10.6px;line-height:14px;color:#323130;transform:scaleX(0.9829);">Proposed Start</div>
<div class="r" style="left:321.00px;top:511.70px;width:473.50px;height:24.50px;background:#f3f3f3;border-radius:4px"></div>
<div class="t" style="left:331.00px;top:517.63px;font-size:10.6px;line-height:14px;color:#242424;transform:scaleX(1.0397);">6/5/2025</div>
<svg class="r" style="left:771.50px;top:518.20px;" width="13" height="13" viewBox="0 0 13 13" fill="none" stroke="#424242" stroke-width="1"><rect x="1" y="1" width="11" height="11" rx="2.5" stroke="#555"/><path d="M1 4.3 H12" stroke="#555"/><path d="M3.8 6.8 h1 M6 6.8 h1 M8.2 6.8 h1 M3.8 9 h1 M6 9 h1" stroke="#555"/></svg>
<div class="t" style="left:180.60px;top:551.83px;font-size:10.6px;line-height:14px;color:#323130;transform:scaleX(0.9630);">Proposed End</div>
<div class="r" style="left:321.00px;top:549.50px;width:473.50px;height:24.50px;background:#f3f3f3;border-radius:4px"></div>
<div class="t" style="left:331.00px;top:555.43px;font-size:10.6px;line-height:14px;color:#242424;transform:scaleX(1.0391);">6/12/2025</div>
<svg class="r" style="left:771.50px;top:556.00px;" width="13" height="13" viewBox="0 0 13 13" fill="none" stroke="#424242" stroke-width="1"><rect x="1" y="1" width="11" height="11" rx="2.5" stroke="#555"/><path d="M1 4.3 H12" stroke="#555"/><path d="M3.8 6.8 h1 M6 6.8 h1 M8.2 6.8 h1 M3.8 9 h1 M6 9 h1" stroke="#555"/></svg>
<div class="t" style="left:180.60px;top:589.83px;font-size:10.6px;line-height:14px;color:#323130;transform:scaleX(0.9855);">Actual Start</div>
<div class="r" style="left:321.00px;top:588.00px;width:473.50px;height:24.50px;background:#f3f3f3;border-radius:4px"></div>
<div class="t" style="left:331.00px;top:593.93px;font-size:10.6px;line-height:14px;color:#616161;">---</div>
<svg class="r" style="left:771.50px;top:594.50px;" width="13" height="13" viewBox="0 0 13 13" fill="none" stroke="#424242" stroke-width="1"><rect x="1" y="1" width="11" height="11" rx="2.5" stroke="#555"/><path d="M1 4.3 H12" stroke="#555"/><path d="M3.8 6.8 h1 M6 6.8 h1 M8.2 6.8 h1 M3.8 9 h1 M6 9 h1" stroke="#555"/></svg>
<div class="t" style="left:180.60px;top:627.83px;font-size:10.6px;line-height:14px;color:#323130;transform:scaleX(0.9733);">Actual End</div>
<div class="r" style="left:321.00px;top:625.90px;width:473.50px;height:24.50px;background:#f3f3f3;border-radius:4px"></div>
<div class="t" style="left:331.00px;top:631.83px;font-size:10.6px;line-height:14px;color:#616161;">---</div>
<svg class="r" style="left:771.50px;top:632.40px;" width="13" height="13" viewBox="0 0 13 13" fill="none" stroke="#424242" stroke-width="1"><rect x="1" y="1" width="11" height="11" rx="2.5" stroke="#555"/><path d="M1 4.3 H12" stroke="#555"/><path d="M3.8 6.8 h1 M6 6.8 h1 M8.2 6.8 h1 M3.8 9 h1 M6 9 h1" stroke="#555"/></svg>
<div class="t" style="left:180.60px;top:666.83px;font-size:10.6px;line-height:14px;color:#323130;transform:scaleX(0.9878);">Notify Client Practice Team</div>
<div class="t" style="left:180.60px;top:681.83px;font-size:10.6px;line-height:14px;color:#323130;transform:scaleX(0.9160);">Lead</div>
<div class="r" style="left:321.00px;top:665.40px;width:30.50px;height:15.60px;border:1px solid #616161;border-radius:8px;box-sizing:border-box;background:#fff"></div>
<div class="r" style="left:323.80px;top:668.20px;width:10.00px;height:10.00px;background:#616161;border-radius:50%"></div>
<div class="t" style="left:361.00px;top:666.20px;font-size:10.4px;line-height:14px;color:#242424;">No</div>
<div class="t" style="left:180.60px;top:712.33px;font-size:10.6px;line-height:14px;color:#323130;transform:scaleX(0.8960);">CLE Event</div>
<div class="r" style="left:321.00px;top:710.00px;width:473.50px;height:24.50px;background:#f3f3f3;border-radius:4px"></div>
<div class="t" style="left:331.00px;top:715.93px;font-size:10.6px;line-height:14px;color:#242424;transform:scaleX(1.0848);">No</div>
<svg class="r" style="left:772.50px;top:719.00px;" width="11" height="7" viewBox="0 0 11 7" fill="none" stroke="#424242" stroke-width="1"><path d="M0.8 1 L5.5 5.5 L10.2 1" stroke="#424242" stroke-width="1"/></svg>
<div class="r" style="left:165.00px;top:763.30px;width:644.00px;height:200.00px;background:#fff;border-radius:4px;box-shadow:0 0 2px rgba(0,0,0,.12),0 1px 2px rgba(0,0,0,.16)"></div>
<div class="t" style="left:179.00px;top:771.22px;font-size:11.2px;line-height:15px;color:#242424;-webkit-text-stroke:0.3px #242424;transform:scaleX(0.8628);">DESCRIPTION</div>
<div class="r" style="left:180.00px;top:813.50px;width:614.50px;height:120.00px;background:#f3f3f3;border-radius:4px"></div>
<div class="t" style="left:190.30px;top:820.73px;font-size:10.6px;line-height:14px;color:#242424;transform:scaleX(1.0047);">Cost of breakfast and promos</div>
<div class="r" style="left:821.30px;top:203.80px;width:965.40px;height:251.20px;background:#fff;border-radius:4px;box-shadow:0 0 2px rgba(0,0,0,.12),0 1px 2px rgba(0,0,0,.16)"></div>
<div class="t" style="left:836.00px;top:222.92px;font-size:11.2px;line-height:15px;color:#242424;-webkit-text-stroke:0.3px #242424;transform:scaleX(0.8782);">MARKETING LISTS</div>
<svg class="r" style="left:1510.00px;top:222.00px;" width="13" height="13" viewBox="0 0 13 13" fill="none" stroke="#424242" stroke-width="1"><path d="M2 2 H9 L10.5 3.5 V11.5 H2 Z" stroke="#555"/><path d="M4 9.5 L8.5 4.5 L9.3 5.3 L4.8 10.3 Z" stroke="#555" stroke-width="0.8"/></svg>
<div class="t" style="left:1534.00px;top:222.33px;font-size:10.6px;line-height:14px;color:#242424;transform:scaleX(0.9969);">Add Existing Marketin...</div>
<svg class="r" style="left:1668.50px;top:222.50px;" width="13" height="13" viewBox="0 0 13 13" fill="none" stroke="#424242" stroke-width="1"><path d="M4.2 2.2 A4.8 4.8 0 1 0 7.8 1.8" stroke="#444" stroke-width="1"/><path d="M2.8 0.8 L4.5 2.4 L2.6 3.8" stroke="#444" stroke-width="1"/></svg>
<div class="t" style="left:1693.00px;top:222.33px;font-size:10.6px;line-height:14px;color:#242424;transform:scaleX(0.9430);">Refresh</div>
<div class="r" style="left:1754.20px;top:226.50px;width:1.60px;height:1.60px;background:#424242;border-radius:50%"></div>
<div class="r" style="left:1754.20px;top:230.00px;width:1.60px;height:1.60px;background:#424242;border-radius:50%"></div>
<div class="r" style="left:1754.20px;top:233.50px;width:1.60px;height:1.60px;background:#424242;border-radius:50%"></div>
<div class="r" style="left:836.00px;top:246.50px;width:937.00px;height:1.00px;background:#e0e0e0"></div>
<div class="r" style="left:860.50px;top:257.20px;width:12.50px;height:12.50px;border:1.2px solid #616161;border-radius:2px;box-sizing:border-box"></div>
<div class="t" style="left:893.10px;top:257.32px;font-size:10.9px;line-height:14px;color:#242424;-webkit-text-stroke:0.25px #242424;transform:scaleX(0.9548);">Name</div>
<svg class="r" style="left:926.30px;top:258.10px;" width="6" height="11" viewBox="0 0 6 11" fill="none" stroke="#424242" stroke-width="1"><path d="M3 10.5 V1.2 M0.8 3.4 L3 1.2 L5.2 3.4" stroke="#424242" stroke-width="1"/></svg>
<svg class="r" style="left:934.60px;top:261.80px;" width="7" height="5" viewBox="0 0 7 5" fill="none" stroke="#424242" stroke-width="1"><path d="M0.8 0.8 L3.5 3.5 L6.2 0.8" stroke="#424242" stroke-width="0.9"/></svg>
<div class="t" style="left:1653.00px;top:257.32px;font-size:10.9px;line-height:14px;color:#242424;-webkit-text-stroke:0.25px #242424;transform:scaleX(1.0027);">Members Count</div>
<svg class="r" style="left:1733.50px;top:261.80px;" width="7" height="5" viewBox="0 0 7 5" fill="none" stroke="#424242" stroke-width="1"><path d="M0.8 0.8 L3.5 3.5 L6.2 0.8" stroke="#424242" stroke-width="0.9"/></svg>
<div class="r" style="left:850.00px;top:279.50px;width:898.50px;height:1.00px;background:#e6e6e6"></div>
<div class="r" style="left:861.50px;top:292.30px;width:12.50px;height:12.50px;border:1.2px solid #616161;border-radius:2px;box-sizing:border-box"></div>
<div class="t" style="left:893.00px;top:291.93px;font-size:10.6px;line-height:14px;color:#115ea3;transform:scaleX(0.9667);">*BD Event_Breakfast with Key Clients</div>
<div class="t" style="left:1729.00px;top:291.73px;font-size:10.6px;line-height:14px;color:#242424;transform:scaleX(0.9838);">25</div>
<div class="r" style="left:850.00px;top:313.50px;width:898.50px;height:1.00px;background:#eeeeee"></div>
<div class="r" style="left:861.50px;top:325.60px;width:12.50px;height:12.50px;border:1.2px solid #616161;border-radius:2px;box-sizing:border-box"></div>
<div class="t" style="left:893.00px;top:325.13px;font-size:10.6px;line-height:14px;color:#115ea3;transform:scaleX(0.9697);">VIP Contacts</div>
<div class="r" style="left:850.00px;top:347.00px;width:898.50px;height:1.00px;background:#eeeeee"></div>
<div class="r" style="left:850.00px;top:404.50px;width:898.50px;height:1.00px;background:#e6e6e6"></div>
<div class="t" style="left:850.00px;top:416.83px;font-size:10.6px;line-height:14px;color:#424242;transform:scaleX(0.9323);">Rows: 2</div>
<div class="r" style="left:821.30px;top:468.50px;width:965.40px;height:285.50px;background:#fff;border-radius:4px;box-shadow:0 0 2px rgba(0,0,0,.12),0 1px 2px rgba(0,0,0,.16)"></div>
<div class="t" style="left:835.00px;top:475.82px;font-size:11.2px;line-height:15px;color:#242424;-webkit-text-stroke:0.3px #242424;transform:scaleX(0.8371);">EVENT RESPONSES</div>
<svg class="r" style="left:1527.00px;top:522.00px;" width="12" height="12" viewBox="0 0 12 12" fill="none" stroke="#424242" stroke-width="1"><path d="M6 1 V11.5 M0.8 6.2 H11.2" stroke="#424242" stroke-width="1"/></svg>
<div class="t" style="left:1551.00px;top:521.23px;font-size:10.6px;line-height:14px;color:#242424;transform:scaleX(0.9614);">New Event Response</div>
<svg class="r" style="left:1668.50px;top:521.50px;" width="13" height="13" viewBox="0 0 13 13" fill="none" stroke="#424242" stroke-width="1"><path d="M4.2 2.2 A4.8 4.8 0 1 0 7.8 1.8" stroke="#444" stroke-width="1"/><path d="M2.8 0.8 L4.5 2.4 L2.6 3.8" stroke="#444" stroke-width="1"/></svg>
<div class="t" style="left:1693.00px;top:521.23px;font-size:10.6px;line-height:14px;color:#242424;transform:scaleX(0.9430);">Refresh</div>
<div class="r" style="left:1754.20px;top:525.50px;width:1.60px;height:1.60px;background:#424242;border-radius:50%"></div>
<div class="r" style="left:1754.20px;top:529.00px;width:1.60px;height:1.60px;background:#424242;border-radius:50%"></div>
<div class="r" style="left:1754.20px;top:532.50px;width:1.60px;height:1.60px;background:#424242;border-radius:50%"></div>
<div class="r" style="left:836.00px;top:544.50px;width:937.00px;height:1.00px;background:#e0e0e0"></div>
<div class="r" style="left:860.50px;top:555.50px;width:12.50px;height:12.50px;border:1.2px solid #616161;border-radius:2px;box-sizing:border-box"></div>
<div class="t" style="left:893.70px;top:554.92px;font-size:10.9px;line-height:14px;color:#242424;-webkit-text-stroke:0.25px #242424;transform:scaleX(0.9374);">Received On</div>
<svg class="r" style="left:956.30px;top:559.40px;" width="7" height="5" viewBox="0 0 7 5" fill="none" stroke="#424242" stroke-width="1"><path d="M0.8 0.8 L3.5 3.5 L6.2 0.8" stroke="#424242" stroke-width="0.9"/></svg>
<div class="t" style="left:1008.60px;top:554.92px;font-size:10.9px;line-height:14px;color:#242424;-webkit-text-stroke:0.25px #242424;transform:scaleX(0.9626);">Parent Campaign</div>
<svg class="r" style="left:1095.50px;top:555.70px;" width="6" height="11" viewBox="0 0 6 11" fill="none" stroke="#424242" stroke-width="1"><path d="M3 10.5 V1.2 M0.8 3.4 L3 1.2 L5.2 3.4" stroke="#424242" stroke-width="1"/></svg>
<svg class="r" style="left:1104.80px;top:559.40px;" width="7" height="5" viewBox="0 0 7 5" fill="none" stroke="#424242" stroke-width="1"><path d="M0.8 0.8 L3.5 3.5 L6.2 0.8" stroke="#424242" stroke-width="0.9"/></svg>
<div class="t" style="left:1161.30px;top:554.92px;font-size:10.9px;line-height:14px;color:#242424;-webkit-text-stroke:0.25px #242424;transform:scaleX(0.9887);">Actual Start Dat...</div>
<svg class="r" style="left:1251.20px;top:559.40px;" width="7" height="5" viewBox="0 0 7 5" fill="none" stroke="#424242" stroke-width="1"><path d="M0.8 0.8 L3.5 3.5 L6.2 0.8" stroke="#424242" stroke-width="0.9"/></svg>
<div class="t" style="left:1276.30px;top:554.92px;font-size:10.9px;line-height:14px;color:#242424;-webkit-text-stroke:0.25px #242424;transform:scaleX(0.9373);">Response Code</div>
<svg class="r" style="left:1354.50px;top:555.70px;" width="6" height="11" viewBox="0 0 6 11" fill="none" stroke="#424242" stroke-width="1"><path d="M3 10.5 V1.2 M0.8 3.4 L3 1.2 L5.2 3.4" stroke="#424242" stroke-width="1"/></svg>
<svg class="r" style="left:1364.30px;top:559.40px;" width="7" height="5" viewBox="0 0 7 5" fill="none" stroke="#424242" stroke-width="1"><path d="M0.8 0.8 L3.5 3.5 L6.2 0.8" stroke="#424242" stroke-width="0.9"/></svg>
<div class="t" style="left:1390.70px;top:554.92px;font-size:10.9px;line-height:14px;color:#242424;-webkit-text-stroke:0.25px #242424;transform:scaleX(0.9748);">Customer</div>
<svg class="r" style="left:1440.10px;top:559.40px;" width="7" height="5" viewBox="0 0 7 5" fill="none" stroke="#424242" stroke-width="1"><path d="M0.8 0.8 L3.5 3.5 L6.2 0.8" stroke="#424242" stroke-width="0.9"/></svg>
<div class="t" style="left:1544.00px;top:554.92px;font-size:10.9px;line-height:14px;color:#242424;-webkit-text-stroke:0.25px #242424;transform:scaleX(0.9806);">Company Name (Parent...</div>
<svg class="r" style="left:1672.30px;top:559.40px;" width="7" height="5" viewBox="0 0 7 5" fill="none" stroke="#424242" stroke-width="1"><path d="M0.8 0.8 L3.5 3.5 L6.2 0.8" stroke="#424242" stroke-width="0.9"/></svg>
<div class="t" style="left:1697.00px;top:554.92px;font-size:10.9px;line-height:14px;color:#242424;-webkit-text-stroke:0.25px #242424;transform:scaleX(0.9546);">Job Title (F</div>
<div class="r" style="left:850.00px;top:578.50px;width:898.50px;height:1.00px;background:#e6e6e6"></div>
<div class="r" style="left:861.50px;top:590.00px;width:12.50px;height:12.50px;border:1.2px solid #616161;border-radius:2px;box-sizing:border-box"></div>
<div class="t" style="left:893.00px;top:589.33px;font-size:10.6px;line-height:14px;color:#242424;transform:scaleX(1.0421);">3/5/2025</div>
<div class="t" style="left:1007.80px;top:589.33px;font-size:10.6px;line-height:14px;color:#115ea3;transform:scaleX(0.9713);">*Breakfast Event with Key ...</div>
<div class="t" style="left:1281.70px;top:589.33px;font-size:10.6px;line-height:14px;color:#242424;transform:scaleX(0.9955);">Accepted</div>
<div class="t" style="left:1390.70px;top:589.33px;font-size:10.6px;line-height:14px;color:#242424;transform:scaleX(0.9859);">1st Source Corporation, 1...</div>
<div class="r" style="left:850.00px;top:612.00px;width:898.50px;height:1.00px;background:#eeeeee"></div>
<div class="r" style="left:861.50px;top:623.50px;width:12.50px;height:12.50px;border:1.2px solid #616161;border-radius:2px;box-sizing:border-box"></div>
<div class="t" style="left:893.00px;top:622.83px;font-size:10.6px;line-height:14px;color:#242424;transform:scaleX(1.0221);">3/10/2025</div>
<div class="t" style="left:1007.80px;top:622.83px;font-size:10.6px;line-height:14px;color:#115ea3;transform:scaleX(0.9713);">*Breakfast Event with Key ...</div>
<div class="t" style="left:1281.70px;top:622.83px;font-size:10.6px;line-height:14px;color:#242424;transform:scaleX(1.0368);">Attended</div>
<div class="t" style="left:1390.70px;top:622.83px;font-size:10.6px;line-height:14px;color:#242424;transform:scaleX(1.0044);">Victoria Gregory, Victoria ...</div>
<div class="r" style="left:850.00px;top:645.50px;width:898.50px;height:1.00px;background:#eeeeee"></div>
<div class="r" style="left:854.30px;top:693.00px;width:654.30px;height:6.00px;background:#c2c2c2;border-radius:3px"></div>
<div class="r" style="left:850.00px;top:702.50px;width:898.50px;height:1.00px;background:#e6e6e6"></div>
<div class="t" style="left:850.00px;top:715.03px;font-size:10.6px;line-height:14px;color:#424242;transform:scaleX(0.9323);">Rows: 2</div>
<div class="r" style="left:821.30px;top:767.70px;width:965.40px;height:300.00px;background:#fff;border-radius:4px;box-shadow:0 0 2px rgba(0,0,0,.12),0 1px 2px rgba(0,0,0,.16)"></div>
<div class="t" style="left:836.00px;top:784.12px;font-size:11.2px;line-height:15px;color:#242424;-webkit-text-stroke:0.3px #242424;transform:scaleX(0.9047);">CAMPAIGN ACTIVITIES</div>
<svg class="r" style="left:1515.50px;top:785.00px;" width="12" height="12" viewBox="0 0 12 12" fill="none" stroke="#424242" stroke-width="1"><path d="M6 1 V11.5 M0.8 6.2 H11.2" stroke="#424242" stroke-width="1"/></svg>
<div class="t" style="left:1539.00px;top:784.33px;font-size:10.6px;line-height:14px;color:#242424;transform:scaleX(1.0148);">New Campaign Activity</div>
<svg class="r" style="left:1668.50px;top:784.50px;" width="13" height="13" viewBox="0 0 13 13" fill="none" stroke="#424242" stroke-width="1"><path d="M4.2 2.2 A4.8 4.8 0 1 0 7.8 1.8" stroke="#444" stroke-width="1"/><path d="M2.8 0.8 L4.5 2.4 L2.6 3.8" stroke="#444" stroke-width="1"/></svg>
<div class="t" style="left:1693.00px;top:784.33px;font-size:10.6px;line-height:14px;color:#242424;transform:scaleX(0.9430);">Refresh</div>
<div class="r" style="left:1754.20px;top:788.50px;width:1.60px;height:1.60px;background:#424242;border-radius:50%"></div>
<div class="r" style="left:1754.20px;top:792.00px;width:1.60px;height:1.60px;background:#424242;border-radius:50%"></div>
<div class="r" style="left:1754.20px;top:795.50px;width:1.60px;height:1.60px;background:#424242;border-radius:50%"></div>
<div class="r" style="left:836.00px;top:808.30px;width:937.00px;height:1.00px;background:#e0e0e0"></div>
<div class="r" style="left:860.50px;top:819.00px;width:12.50px;height:12.50px;border:1.2px solid #616161;border-radius:2px;box-sizing:border-box"></div>
<div class="t" style="left:893.20px;top:819.22px;font-size:10.9px;line-height:14px;color:#242424;-webkit-text-stroke:0.25px #242424;transform:scaleX(0.9588);">Subject</div>
<svg class="r" style="left:933.30px;top:820.00px;" width="6" height="11" viewBox="0 0 6 11" fill="none" stroke="#424242" stroke-width="1"><path d="M3 10.5 V1.2 M0.8 3.4 L3 1.2 L5.2 3.4" stroke="#424242" stroke-width="1"/></svg>
<svg class="r" style="left:942.60px;top:823.70px;" width="7" height="5" viewBox="0 0 7 5" fill="none" stroke="#424242" stroke-width="1"><path d="M0.8 0.8 L3.5 3.5 L6.2 0.8" stroke="#424242" stroke-width="0.9"/></svg>
<div class="t" style="left:1007.80px;top:819.22px;font-size:10.9px;line-height:14px;color:#242424;-webkit-text-stroke:0.25px #242424;transform:scaleX(0.9570);">Channel</div>
<svg class="r" style="left:1050.00px;top:823.70px;" width="7" height="5" viewBox="0 0 7 5" fill="none" stroke="#424242" stroke-width="1"><path d="M0.8 0.8 L3.5 3.5 L6.2 0.8" stroke="#424242" stroke-width="0.9"/></svg>
<div class="t" style="left:1084.70px;top:819.22px;font-size:10.9px;line-height:14px;color:#242424;-webkit-text-stroke:0.25px #242424;transform:scaleX(0.9574);">Actual St...</div>
<svg class="r" style="left:1141.80px;top:823.70px;" width="7" height="5" viewBox="0 0 7 5" fill="none" stroke="#424242" stroke-width="1"><path d="M0.8 0.8 L3.5 3.5 L6.2 0.8" stroke="#424242" stroke-width="0.9"/></svg>
<div class="t" style="left:1166.90px;top:819.22px;font-size:10.9px;line-height:14px;color:#242424;-webkit-text-stroke:0.25px #242424;transform:scaleX(0.9704);">Actual End</div>
<svg class="r" style="left:1221.50px;top:823.70px;" width="7" height="5" viewBox="0 0 7 5" fill="none" stroke="#424242" stroke-width="1"><path d="M0.8 0.8 L3.5 3.5 L6.2 0.8" stroke="#424242" stroke-width="0.9"/></svg>
<div class="t" style="left:1246.70px;top:819.22px;font-size:10.9px;line-height:14px;color:#242424;-webkit-text-stroke:0.25px #242424;transform:scaleX(1.0060);">Description</div>
<svg class="r" style="left:1304.20px;top:823.70px;" width="7" height="5" viewBox="0 0 7 5" fill="none" stroke="#424242" stroke-width="1"><path d="M0.8 0.8 L3.5 3.5 L6.2 0.8" stroke="#424242" stroke-width="0.9"/></svg>
<div class="t" style="left:1378.10px;top:819.22px;font-size:10.9px;line-height:14px;color:#242424;-webkit-text-stroke:0.25px #242424;transform:scaleX(1.0005);">Category</div>
<svg class="r" style="left:1425.00px;top:823.70px;" width="7" height="5" viewBox="0 0 7 5" fill="none" stroke="#424242" stroke-width="1"><path d="M0.8 0.8 L3.5 3.5 L6.2 0.8" stroke="#424242" stroke-width="0.9"/></svg>
<div class="t" style="left:1454.50px;top:819.22px;font-size:10.9px;line-height:14px;color:#242424;-webkit-text-stroke:0.25px #242424;transform:scaleX(0.9873);">Organizer</div>
<svg class="r" style="left:1505.60px;top:823.70px;" width="7" height="5" viewBox="0 0 7 5" fill="none" stroke="#424242" stroke-width="1"><path d="M0.8 0.8 L3.5 3.5 L6.2 0.8" stroke="#424242" stroke-width="0.9"/></svg>
<div class="t" style="left:1531.10px;top:819.22px;font-size:10.9px;line-height:14px;color:#242424;-webkit-text-stroke:0.25px #242424;transform:scaleX(0.9823);">Outsource Ven...</div>
<svg class="r" style="left:1619.40px;top:823.70px;" width="7" height="5" viewBox="0 0 7 5" fill="none" stroke="#424242" stroke-width="1"><path d="M0.8 0.8 L3.5 3.5 L6.2 0.8" stroke="#424242" stroke-width="0.9"/></svg>
<div class="t" style="left:1643.70px;top:819.22px;font-size:10.9px;line-height:14px;color:#242424;-webkit-text-stroke:0.25px #242424;transform:scaleX(0.9983);">Owner</div>
<svg class="r" style="left:1678.80px;top:823.70px;" width="7" height="5" viewBox="0 0 7 5" fill="none" stroke="#424242" stroke-width="1"><path d="M0.8 0.8 L3.5 3.5 L6.2 0.8" stroke="#424242" stroke-width="0.9"/></svg>
<div class="t" style="left:1720.90px;top:819.22px;font-size:10.9px;line-height:14px;color:#242424;-webkit-text-stroke:0.25px #242424;transform:scaleX(0.9467);">Requi</div>
<div class="r" style="left:850.00px;top:841.50px;width:898.50px;height:1.00px;background:#e6e6e6"></div>
<div class="r" style="left:861.50px;top:853.50px;width:12.50px;height:12.50px;border:1.2px solid #616161;border-radius:2px;box-sizing:border-box"></div>
<div class="t" style="left:893.00px;top:853.93px;font-size:10.6px;line-height:14px;color:#115ea3;transform:scaleX(0.9793);">Breakfast event - ...</div>
<div class="t" style="left:1014.00px;top:853.93px;font-size:10.6px;line-height:14px;color:#242424;transform:scaleX(0.9432);">Email</div>
<div class="t" style="left:1246.60px;top:853.93px;font-size:10.6px;line-height:14px;color:#242424;transform:scaleX(0.9891);">Email atttendees</div>
<div class="r" style="left:1637.40px;top:851.00px;width:17.00px;height:17.00px;background:#0b7a75;border-radius:50%"></div>
<div class="t" style="left:1639.80px;top:855.44px;font-size:6.8px;line-height:9px;color:#fff;-webkit-text-stroke:0.2px #fff;transform:scaleX(1.1475);">CR</div>
<div class="r" style="left:1650.00px;top:861.50px;width:5.00px;height:5.00px;background:#fff;border-radius:50%;box-shadow:inset 0 0 0 1px #8a8a8a"></div>
<div class="t" style="left:1658.40px;top:853.93px;font-size:10.6px;line-height:14px;color:#115ea3;transform:scaleX(0.9356);">Claire Ro...</div>
<div class="r" style="left:850.00px;top:875.50px;width:898.50px;height:1.00px;background:#eeeeee"></div>
<div class="r" style="left:0.00px;top:900.00px;width:1813.00px;height:1.00px;background:#bcc6c9"></div>
</div><div id="bot"></div></body></html>
